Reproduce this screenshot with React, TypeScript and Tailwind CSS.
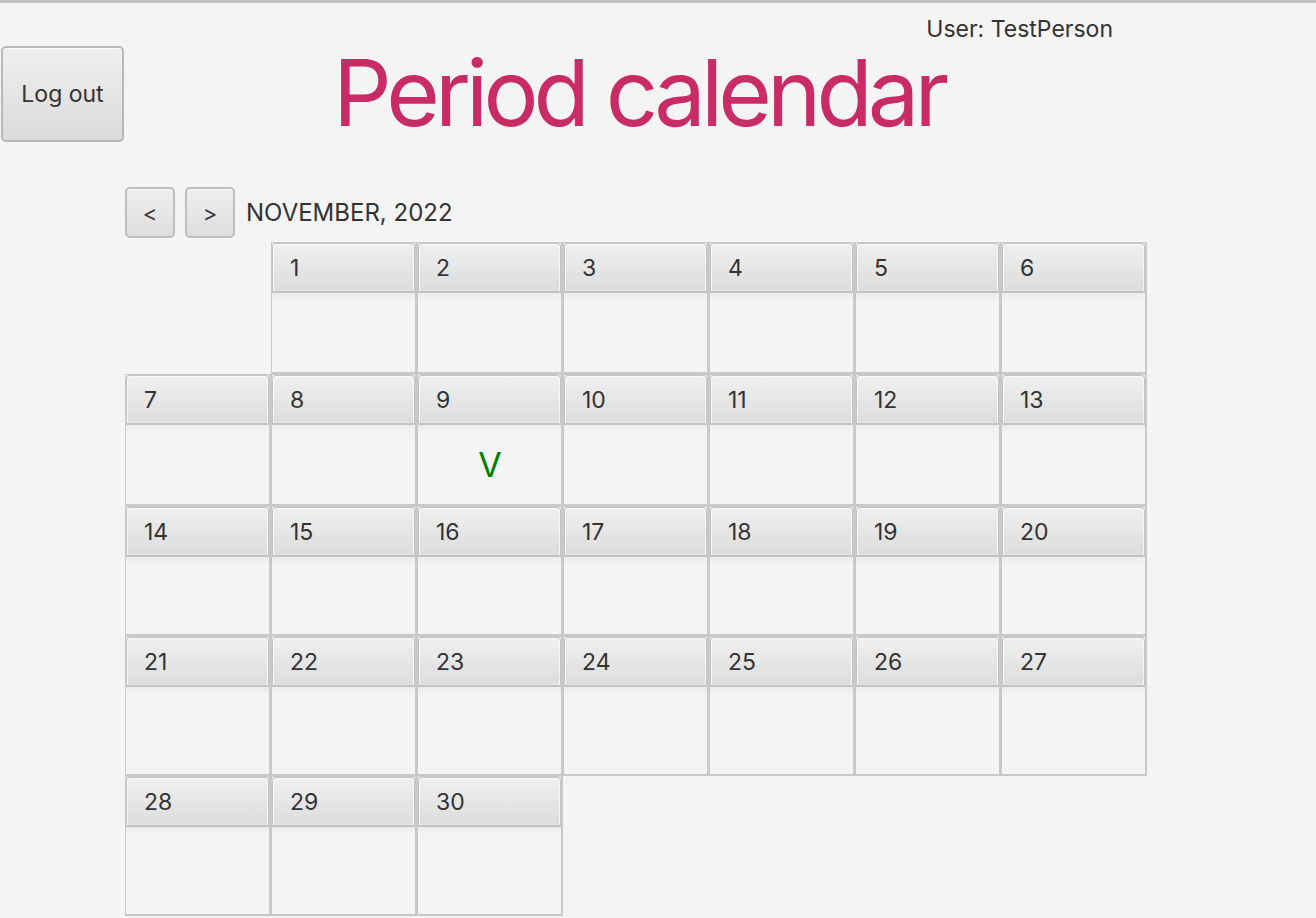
import React from "react";

const FONT = { fontFamily: "Inter, 'Liberation Sans', Arial, sans-serif" };

function DayCell({ day, mark, start }: { day: number; mark?: string; start?: boolean }) {
  return (
    <div
      className={
        "flex flex-col border-t border-l border-r-2 border-b-2 border-[#c9c9c9] bg-[#f4f4f4] " +
        (start ? "col-start-2" : "")
      }
    >
      <div className="h-[50px] shrink-0 rounded-t-[4px] border border-[#c4c4c4] border-b-2 border-b-[#c2c2c2] bg-gradient-to-b from-[#f0f0f0] to-[#dcdcdc] shadow-[inset_0_1px_0_#fafafa,inset_1px_0_0_#f6f6f6,inset_-1px_0_0_#f6f6f6,inset_0_-1px_0_#e6e6e6] flex items-center pl-[17px] pt-px text-[23px] text-[#333333]">
        {day}
      </div>
      <div className="flex-1 bg-gradient-to-b from-[#ececec] to-[#f4f4f4] to-[8px] flex items-center justify-center">
        {mark && <span className="text-[34px] leading-none text-[#008000] pl-px">{mark}</span>}
      </div>
    </div>
  );
}

export default function App() {
  const days = Array.from({ length: 30 }, (_, i) => i + 1);
  return (
    <div
      className="w-[1316px] h-[918px] bg-[#f4f4f4] border-t-[3px] border-[#c3c3c3] overflow-hidden text-[#333333]"
      style={FONT}
    >
      <div className="flex h-[184px]">
        <div className="pt-[43px] pl-px">
          <button className="w-[123px] h-[96px] rounded-[5px] border-2 border-[#b8b8b8] bg-gradient-to-b from-[#efefef] to-[#dbdbdb] shadow-[inset_0_1px_0_#fcfcfc] text-[23px] text-[#333333]">
            Log out
          </button>
        </div>
        <div className="flex-1 min-w-0 pl-[209px] pt-[44px]">
          <h1 className="text-[92px] leading-none tracking-[-0.054em] text-[#c92c65] font-normal whitespace-nowrap">
            Period calendar
          </h1>
        </div>
        <div className="mr-[203px] pt-[15px] text-[23px] leading-none whitespace-nowrap">
          User: TestPerson
        </div>
      </div>
      <div className="flex items-start h-[55px] pl-[125px]">
        <button className="w-[50px] h-[51px] rounded-[5px] border-2 border-[#bdbdbd] bg-gradient-to-b from-[#efefef] to-[#dddddd] shadow-[inset_0_1px_0_#fcfcfc] text-[22px] leading-none">
          &lt;
        </button>
        <button className="ml-[10px] w-[50px] h-[51px] rounded-[5px] border-2 border-[#bdbdbd] bg-gradient-to-b from-[#efefef] to-[#dddddd] shadow-[inset_0_1px_0_#fcfcfc] text-[22px] leading-none">
          &gt;
        </button>
        <div className="ml-[11px] h-[52px] flex items-center text-[24px] whitespace-nowrap">
          NOVEMBER, 2022
        </div>
      </div>
      <div className="ml-[125px] grid grid-cols-[repeat(7,146px)] grid-rows-[132px_132px_130px_140px_140px]">
        {days.map((d) => (
          <DayCell key={d} day={d} start={d === 1} mark={d === 9 ? "V" : undefined} />
        ))}
      </div>
    </div>
  );
}
